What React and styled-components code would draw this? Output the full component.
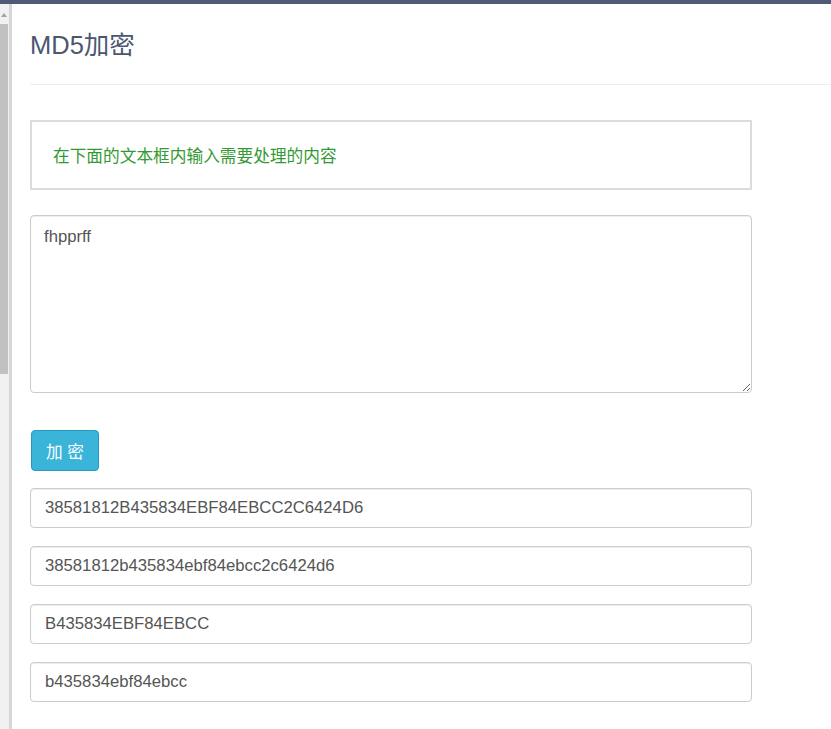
import React from 'react';
import styled, { createGlobalStyle } from 'styled-components';

const GlobalStyle = createGlobalStyle`
  html, body {
    margin: 0;
    padding: 0;
    background: #ffffff;
    overflow: hidden;
  }
  body {
    font-family: "Liberation Sans", "Noto Sans CJK SC", sans-serif;
  }
  * {
    box-sizing: border-box;
  }
`;

const Page = styled.div`
  display: flex;
  flex-direction: column;
  width: 831px;
  height: 729px;
`;

const TopBar = styled.div`
  height: 4px;
  background-color: #505b79;
  flex-shrink: 0;
`;

const Body = styled.div`
  display: flex;
  flex: 1;
  min-height: 0;
`;

const Rail = styled.div`
  width: 12px;
  flex-shrink: 0;
  background-color: #f1f1f1;
  border-right: 3px solid #d6d6d6;
  display: flex;
  flex-direction: column;
  align-items: flex-start;
`;

const RailArrow = styled.div`
  margin: 9px 0 0 1px;
  width: 0;
  height: 0;
  border-left: 3px solid transparent;
  border-right: 3px solid transparent;
  border-bottom: 4px solid #a3a3a3;
`;

const RailThumb = styled.div`
  margin-top: 7px;
  width: 8px;
  height: 350px;
  background-color: #c1c1c1;
`;

const Main = styled.main`
  flex: 1;
  padding: 26px 0 0 18px;
  display: flex;
  flex-direction: column;
`;

const Header = styled.div`
  padding-bottom: 24px;
  border-bottom: 1px solid #eeeeee;
`;

const Title = styled.h3`
  margin: 0;
  font-size: 25.5px;
  line-height: 30px;
  font-weight: 400;
  color: #4b5770;
`;

const Content = styled.div`
  width: 722px;
  display: flex;
  flex-direction: column;
`;

const Notice = styled.div`
  margin-top: 35px;
  height: 70px;
  border: 2px solid #dcdcdc;
  padding: 0 21px;
  display: flex;
  align-items: center;
  font-size: 16.7px;
  color: #339933;
`;

const Source = styled.textarea`
  margin-top: 25px;
  height: 178px;
  border: 1px solid #cccccc;
  border-radius: 4px;
  box-shadow: inset 0 1px 1px rgba(0, 0, 0, 0.075);
  padding: 9px 13px;
  font-family: "Liberation Sans", "Noto Sans CJK SC", sans-serif;
  font-size: 16.7px;
  line-height: 23px;
  color: #555555;
  resize: vertical;
  outline: none;
`;

const ButtonRow = styled.div`
  margin-top: 37px;
  padding-left: 1px;
  display: flex;
`;

const InfoButton = styled.button`
  width: 68px;
  height: 41px;
  border: 1px solid #269abc;
  border-radius: 4px;
  background-color: #3ab4d9;
  color: #ffffff;
  font-family: "Liberation Sans", "Noto Sans CJK SC", sans-serif;
  font-size: 16.7px;
  padding: 0;
  cursor: pointer;
`;

const Results = styled.div`
  margin-top: 17px;
  display: flex;
  flex-direction: column;
  gap: 18px;
`;

const Field = styled.input`
  height: 40px;
  border: 1px solid #cccccc;
  border-radius: 4px;
  box-shadow: inset 0 1px 1px rgba(0, 0, 0, 0.075);
  padding: 0 14px;
  font-family: "Liberation Sans", "Noto Sans CJK SC", sans-serif;
  font-size: 16.7px;
  color: #555555;
  outline: none;
`;

const results = [
  '38581812B435834EBF84EBCC2C6424D6',
  '38581812b435834ebf84ebcc2c6424d6',
  'B435834EBF84EBCC',
  'b435834ebf84ebcc',
];

const App = () => {
  return (
    <Page>
      <GlobalStyle />
      <TopBar />
      <Body>
        <Rail>
          <RailArrow />
          <RailThumb />
        </Rail>
        <Main>
          <Header>
            <Title>MD5加密</Title>
          </Header>
          <Content>
            <Notice>在下面的文本框内输入需要处理的内容</Notice>
            <Source defaultValue="fhpprff" />
            <ButtonRow>
              <InfoButton>加 密</InfoButton>
            </ButtonRow>
            <Results>
              {results.map((value) => (
                <Field key={value} defaultValue={value} readOnly />
              ))}
            </Results>
          </Content>
        </Main>
      </Body>
    </Page>
  );
};

export default App;
